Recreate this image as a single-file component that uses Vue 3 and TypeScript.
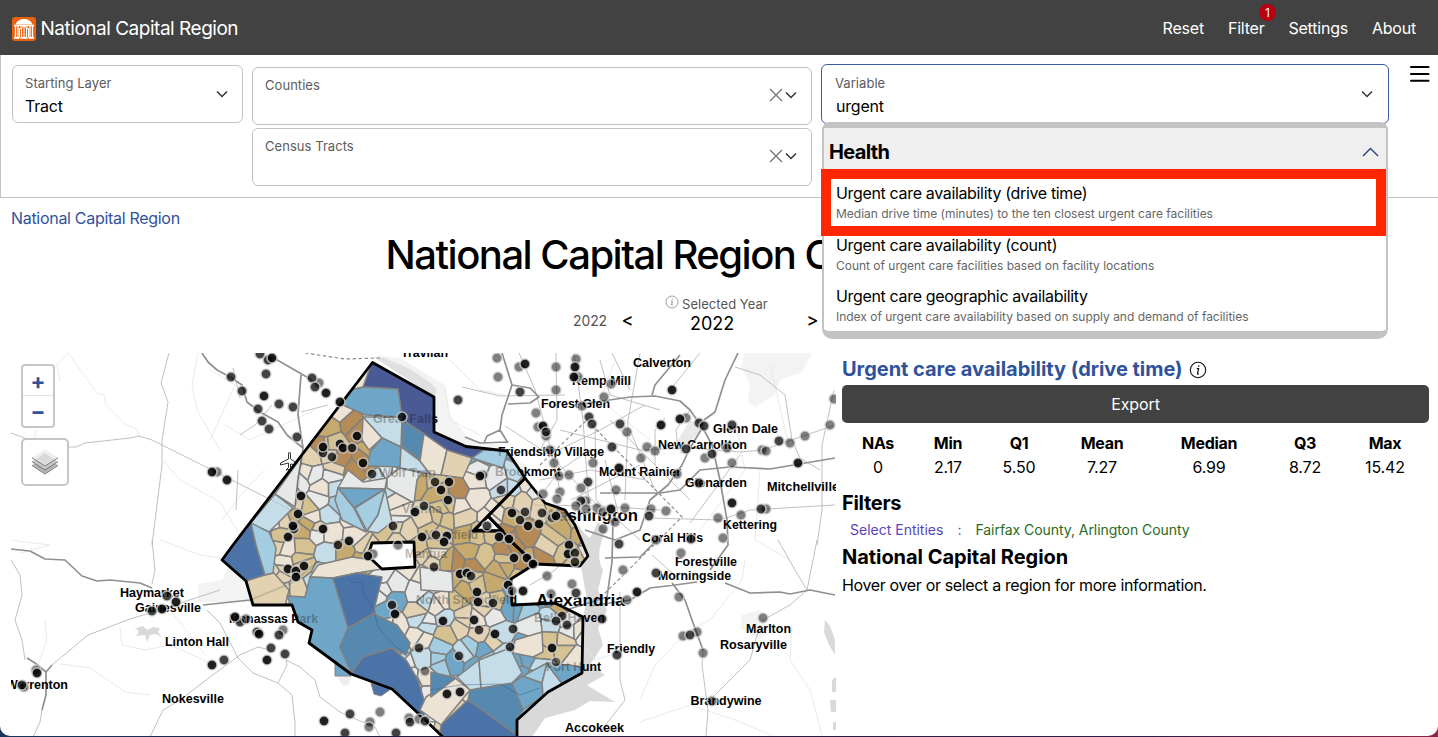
<script setup lang="ts">
type Pt = [number, number]
interface Label { t: string; x: number; y: number; w: number; s?: number }
interface Shape { d: string; fill: string }

const nav = ['Reset', 'Filter', 'Settings', 'About']
const options = [
  { name: 'Urgent care availability (drive time)', note: 'Median drive time (minutes) to the ten closest urgent care facilities' },
  { name: 'Urgent care availability (count)', note: 'Count of urgent care facilities based on facility locations' },
  { name: 'Urgent care geographic availability', note: 'Index of urgent care availability based on supply and demand of facilities' },
]
const stats = [['NAs', '0'], ['Min', '2.17'], ['Q1', '5.50'], ['Mean', '7.27'], ['Median', '6.99'], ['Q3', '8.72'], ['Max', '15.42']]

const shades: Record<string, string> = {
  n: '#4b5a96', a: '#4e73a8', b: '#578ab0', c: '#70a7c7', d: '#a6cee1', e: '#c5dde9',
  w: '#e7e9e8', k: '#ece3d4', t: '#e3d2b2', u: '#d6c190', v: '#c6a96e', x: '#b58b57',
}

const fairfax = 'M372.5 362.5L434 397V432L466 446.500L507 451L525 478L488 516L475 530L499 531L517 547L535 564L511 579L512 605L555 603L583 617L582 673L548 692L517 720V740H446L420 715L392 689L351 674L309 643L312 630L298 622L292 605H253L246 581L222 560L233 545Z'
const arlington = 'M525 478L545 503L565 510L575 525L588 556L580 566L535 564L517 547L488 516Z'
const fairfaxCity = 'M372 543L414 542L415 567L382 569L368 556Z'
const fallsChurch = 'M488 516L473 531H503Z'

// Colour anchors: a small tract takes the shade of the nearest one.
const anchors = `352,408,t 340,425,t 343,433,v 353,428,x 355,452,x 330,442,v 362,440,u 326,460,t 346,453,x 378,430,k 308,466,k 315,482,w 303,490,k 330,488,w 325,505,e
310,508,u 300,528,v 318,520,k 335,528,k 283,530,t 285,560,t 312,552,u 330,558,e 345,552,v 355,536,t 380,538,t 396,508,k 405,492,w 432,478,u 440,500,u 450,491,x
460,480,t 440,460,t 424,452,k 418,468,e 475,473,w 496,480,w 486,452,d 503,462,d 515,480,e 468,500,k 480,516,t 420,522,t 402,530,u 430,540,u 460,537,v 430,558,t
410,577,k 390,582,w 399,596,c 420,588,w 436,585,w 455,580,v 475,570,v 470,592,u 497,573,v 500,558,v 515,550,x 489,547,u 440,606,k 480,603,t 408,612,k 400,628,w
425,620,e 440,642,d 418,655,e 430,665,d 455,655,c 472,650,d 455,630,t 480,625,t 500,618,k 490,640,t 515,612,c 530,610,d 542,600,c 550,625,e 520,630,e 552,637,u
567,640,u 560,614,u 577,622,k 575,650,k 560,657,t 525,663,c 548,672,d 420,683,k 411,665,w 427,703,k 530,488,k 513,501,t 545,507,u 520,520,u 540,520,v 558,520,x
550,538,u 570,528,v 555,552,e 575,548,x 565,560,u 525,547,x 582,556,t 537,550,v 430,630,k 440,622,e 470,612,t 495,600,u 505,638,e 400,645,d`.split(/\s+/).map(a => a.split(','))

function noise(n: number): number {
  const v = Math.sin(n * 127.1 + 11.7) * 43758.5453
  return v - Math.floor(v)
}

function buildTracts(): Shape[] {
  const seeds: Pt[] = []
  const step = 14.5
  let k = 0
  for (let y = 395, row = 0; y < 712; y += step, row++) {
    for (let x = 245 + (row % 2) * step / 2; x < 600; x += step) {
      k++
      if (noise(k + 0.5) < 0.12) continue
      seeds.push([x + (noise(k) - 0.5) * 19, y + (noise(k + 900) - 0.5) * 19])
    }
  }
  return seeds.map((s, i) => {
    let cell: Pt[] = [[s[0] - 28, s[1] - 28], [s[0] + 28, s[1] - 28], [s[0] + 28, s[1] + 28], [s[0] - 28, s[1] + 28]]
    for (const o of seeds) {
      const dx = o[0] - s[0], dy = o[1] - s[1]
      if (o === s || dx * dx + dy * dy > 6400) continue
      const mx = s[0] + dx / 2, my = s[1] + dy / 2
      const side = (p: Pt) => (p[0] - mx) * dx + (p[1] - my) * dy
      const next: Pt[] = []
      cell.forEach((p, j) => {
        const q = cell[(j + 1) % cell.length]
        const a = side(p), b = side(q)
        if (a <= 0) next.push(p)
        if ((a < 0 && b > 0) || (a > 0 && b < 0)) {
          const r = a / (a - b)
          next.push([p[0] + (q[0] - p[0]) * r, p[1] + (q[1] - p[1]) * r])
        }
      })
      cell = next
    }
    let best = Infinity, code = 'k'
    for (const [ax, ay, c] of anchors) {
      const d = (Number(ax) - s[0]) ** 2 + (Number(ay) - s[1]) ** 2
      if (d < best) { best = d; code = c }
    }
    const order = 'cdewktuvx'
    const roll = noise(i + 40)
    const at = order.indexOf(code) + (roll < 0.24 ? -1 : roll > 0.88 ? 1 : 0)
    const key = order[Math.max(0, Math.min(order.length - 1, at))]
    return { d: 'M' + cell.map(p => p[0].toFixed(1) + ' ' + p[1].toFixed(1)).join('L') + 'Z', fill: shades[key] }
  })
}
const tracts = buildTracts()

const largeTracts: Shape[] = ([
  ['n', '372,362 440,397 434,432 466,446 484,450 472,458 447,450 424,434 402,419 398,389 363,387'],
  ['c', '363,387 398,389 402,417 365,415 343,405 350,390'],
  ['e', '363,417 402,417 401,447 382,438'],
  ['k', '363,417 382,438 369,450 362,440'],
  ['b', '402,420 424,434 420,460 402,446'],
  ['c', '382,438 401,447 400,467 368,466 370,452'],
  ['e', '401,447 420,461 430,474 400,468'],
  ['k', '424,434 447,450 441,475 430,474 420,461'],
  ['t', '447,450 472,458 463,478 441,475'],
  ['w', '387,478 400,468 422,473 417,480 414,503 387,488'],
  ['w', '338,488 348,470 363,482 387,478 385,489'],
  ['c', '338,488 385,489 354,508'],
  ['d', '338,488 354,508 366,532 342,520 335,500'],
  ['d', '385,489 378,515 367,531 355,508'],
  ['e', '385,489 392,522 378,533 367,531 378,515'],
  ['d', '484,450 508,450 503,468 472,458'],
  ['e', '275,494 293,508 269,532 250,524'],
  ['w', '302,456 298,478 295,507 275,494'],
  ['a', '222,560 251,523 256,545 265,575 246,581'],
  ['d', '251,523 269,532 276,548 273,573 265,575 256,545'],
  ['t', '246,581 265,575 274,573 289,590 285,606 253,606'],
  ['k', '310,577 318,565 352,557 372,560 382,569 357,573 333,578'],
  ['c', '310,577 333,578 348,612 348,628 340,647 352,674 335,676 309,643 312,630 298,622 287,596 305,597'],
  ['a', '333,578 357,573 382,577 373,614 348,628'],
  ['b', '348,628 373,614 397,625 410,643 406,655 392,648 363,657 352,674 340,647'],
  ['a', '363,657 392,648 406,660 418,680 424,700 424,718 392,689 351,674'],
  ['a', '441,725 468,700 517,735 517,740 440,740'],
  ['b', '470,690 512,683 523,710 517,720 517,735 468,700'],
  ['c', '512,683 523,676 542,683 543,696 523,710'],
  ['d', '523,676 547,663 542,683'],
  ['e', '547,663 563,685 543,696 542,683'],
  ['c', '547,664 570,665 584,668 582,675 563,685'],
  ['k', '426,697 455,678 470,690 441,725 420,710'],
  ['b', '431,672 456,678 431,697'],
  ['e', '457,677 479,660 481,688 470,690'],
  ['e', '479,660 510,648 522,673 512,683 481,688'],
  ['k', '515,640 542,632 543,652 533,657 513,653'],
  ['w', '420,567 452,572 453,592 421,590'],
] as [string, string][]).map(([c, p]) => ({ d: 'M' + p.split(' ').join('L') + 'Z', fill: shades[c] }))

const highways = `M202 353L208 362L217 370L230 377L242 385L247 402L260 412L278 422L287 435L303 448L299 478L296 505
M301 375L298 415L303 448 M272 357L312 380 M11 549L30 551L45 559L65 560L82 576L97 581L110 580L140 583L152 588
M27 658L35 663L46 672V695L42 710M46 672L52 665 M203 605L250 600L292 583L320 560
M502 353L512 385L502 415L500 430L508 443 M512 385L530 388L539 397L530 403L508 404 M500 430L487 436L484 443M465 437L480 443L508 442
M738 353L725 380L715 412L704 420 M575 405L630 397L655 396L680 401L690 410L704 430L712 445L720 480L727 520L728 545L710 570
M652 395L655 385L680 355 M704 425L690 448L682 465L668 485L650 500L640 530L615 540L585 530
M600 493L660 493L680 490L700 470L730 467L770 469L835 458 M605 558L640 557L657 540
M590 606L630 600L650 588L675 585L697 582 M725 583L750 593L780 592L790 594L810 590L835 595
M672 583L685 600L692 620L703 650 M613 520L612 562L607 597L560 612`
const minorRoads = `M11 433L30 440M68 447H76L85 443L130 438L139 436L152 440L210 469L295 512 M169 353L161 383L168 402L162 440V465L152 545
M152 540L155 570L152 584 M11 560L20 575L22 595L15 620L22 640L25 660 M42 710L40 722L33 737 M52 665L88 635L130 619L150 613L220 590
M207 610L220 623L238 658L253 673L278 683L292 695L295 723V737 M278 683L287 665L286 660L300 667L315 680L320 697L340 712L358 720L375 727L380 737
M210 677L240 655L258 647L270 650 M150 737L163 710L180 700L210 677 M735 367L760 375L785 395L792 440L800 458L820 470
M834 390L822 445V510L817 545 M650 518L720 520L750 510L835 505 M690 523L740 455 M703 650L702 665L706 695L708 710L706 737
M713 697L750 660L760 625M763 620L790 605L807 590L817 540M807 590L795 570L778 540 M620 592L620 680L625 700L600 732
M519 353L535 390L546 430L560 490 M556 353L557 420L540 450 M574 353L583 420L590 520 M612 353L630 390 M462 387L500 396L565 395
M505 426L550 455L600 508 M535 505L600 506L660 510 M640 353L628 420L625 500 M670 390L700 353 M595 420L596 500L640 540
M548 455L600 430L645 405 M640 450L690 448L740 452L763 450L835 425 M610 420L690 500 M580 545L555 570L530 585
M652 555L680 580 M545 490L560 470L590 450 M233 368L240 398M301 412L328 405M272 405L255 425L240 435M238 470L236 510
M690 410L676 430L678 450 M665 418L655 430V465 M600 360L610 395L660 410M646 480L590 470L540 480M560 430L640 450 M630 430L655 490 M605 460L620 520 M571 500L640 465`
const faintRoads = `M60 382L57 365L68 353L98 394L104 395L106 405L125 424L136 429L140 436 M198 353L192 385L197 410L220 450 M163 460L180 480L220 502L240 535
M11 540L25 542L50 545 M35 440V430 M20 553L50 545M160 540L200 555L235 560 M120 627L122 645L145 650L170 645L215 665 M60 664L90 668L125 692L150 695
M170 610L182 625L205 655 M45 620L47 640L38 665 M745 560L742 580L710 620L690 630 M683 636L655 665L640 700 M792 625L790 660L810 690L822 735
M640 722L690 705L735 720L775 737 M770 365L790 450 M210 370L235 385L210 440 M222 520L245 490L265 470 M315 410L250 440L225 425
M450 360L480 390L505 395 M615 360L600 400L650 440 M735 420L745 470L700 530 M760 470L755 540L790 560 M580 640L595 660L640 645 M445 387L450 420L480 435`

const labels: Label[] = [
  { t: 'Travilah', x: 401, y: 357, w: 47 }, { t: 'Calverton', x: 633, y: 367, w: 58 }, { t: 'Kemp Mill', x: 572, y: 385, w: 59 },
  { t: 'Forest Glen', x: 541, y: 408, w: 69 }, { t: 'Great Falls', x: 373, y: 423, w: 65 }, { t: 'Friendship Village', x: 498, y: 456, w: 106 },
  { t: 'Brookmont', x: 495, y: 475.5, w: 66 }, { t: 'Mount Rainier', x: 599, y: 476, w: 82 }, { t: 'Glenn Dale', x: 713, y: 433, w: 65 },
  { t: 'New Carrollton', x: 658, y: 449, w: 89 }, { t: 'Glenarden', x: 685, y: 487, w: 62 }, { t: 'Mitchellville', x: 767, y: 491, w: 72 },
  { t: 'Kettering', x: 723, y: 529, w: 54 }, { t: 'Coral Hills', x: 642, y: 542, w: 61 }, { t: 'Washington', x: 543, y: 521, w: 95, s: 17 },
  { t: 'Forestville', x: 675, y: 566, w: 62 }, { t: 'Morningside', x: 658, y: 580, w: 73 }, { t: 'Alexandria', x: 536, y: 605.5, w: 89, s: 17 },
  { t: 'Belle Haven', x: 534, y: 622, w: 71 }, { t: 'Fort Hunt', x: 546, y: 671, w: 55 }, { t: 'Friendly', x: 607, y: 653, w: 48 },
  { t: 'Accokeek', x: 565, y: 732, w: 59 }, { t: 'Marlton', x: 746, y: 633, w: 45 }, { t: 'Rosaryville', x: 720, y: 649, w: 67 },
  { t: 'Brandywine', x: 690.5, y: 704.5, w: 71 }, { t: 'Haymarket', x: 120, y: 597, w: 64 }, { t: 'Gainesville', x: 135, y: 612, w: 66 },
  { t: 'Linton Hall', x: 165, y: 646, w: 64 }, { t: 'Nokesville', x: 162, y: 703, w: 62 }, { t: 'Warrenton', x: 6, y: 689, w: 62 },
  { t: 'Manassas Park', x: 229, y: 623, w: 89 }, { t: 'Wolf Trap', x: 379, y: 477, w: 57 }, { t: 'Vienna', x: 402, y: 513, w: 40 },
  { t: 'Merrifield', x: 424, y: 539, w: 54 }, { t: 'Mantua', x: 405, y: 558, w: 42 }, { t: 'North Springfield', x: 416, y: 604, w: 101 },
]

// x, y, stacking depth
const dots = `231,377,2 242,391,2 264,396,3 258,409,2 279,404,2 293,407,2 262,421,2 269,429,2 297,437,2 266,374,2 268,360,2 272,358,3 260,354,2 319,383,1 312,378,2 315,387,2
326,393,3 340,402,3 402,417,2 357,436,3 323,453,2 323,447,3 340,444,3 343,448,3 352,448,2 332,457,2 363,463,3 372,474,2 217,472,1 212,472,3 227,480,3 301,496,3
298,514,3 294,529,2 293,526,3 288,537,3 323,529,3 349,541,3 338,545,2 393,526,2 415,512,3 424,506,2 422,537,3 398,545,1 497,358,1 519,367,1 525,364,3 498,377,1
520,392,2 458,400,2 556,367,1 556,390,1 576,359,1 575,367,3 578,377,1 574,377,3 611,384,1 604,397,1 582,406,1 536,413,1 589,417,2 592,424,2 538,427,1 543,426,3
546,436,1 546,432,2 620,424,2 627,432,1 612,447,2 593,463,1 550,450,1 554,463,1 619,468,3 559,476,1 569,475,1 560,492,1 557,499,1 543,494,1 588,482,2 581,488,1
616,490,1 483,475,1 480,476,3 501,490,2 435,482,2 449,482,3 441,490,3 448,500,3 512,513,3 525,512,2 542,513,2 520,520,2 528,526,3 539,524,3 552,518,1 556,516,3
487,526,2 436,535,2 447,536,3 444,542,3 499,537,3 509,539,3 569,545,3 586,501,1 581,501,2 576,506,1 586,509,1 597,508,1 603,512,1 611,509,3 625,508,1 615,522,1
603,529,1 619,544,2 672,390,3 686,418,1 680,419,3 699,423,2 704,426,2 661,425,3 732,425,2 647,447,1 655,451,1 641,458,1 686,449,2 727,448,1 732,463,1 705,458,1
712,454,2 762,450,1 766,451,1 779,441,2 790,443,1 805,436,1 798,463,3 830,425,1 834,399,1 677,474,1 699,483,2 651,509,1 649,516,2 666,511,1 718,518,1 732,503,3
741,515,1 766,509,1 761,509,2 723,538,1 656,540,1 691,539,2 167,596,2 176,602,3 152,611,2 162,609,3 36,670,1 37,673,3 24,687,1 22,685,2 212,665,3 240,622,2 235,617,3
246,619,1 257,632,2 259,634,3 283,630,1 279,635,2 271,648,2 267,660,3 285,654,2 224,660,2 288,569,3 296,571,3 296,577,3 304,566,3 373,554,1 368,556,3 392,605,2
395,614,3 419,648,2 425,671,1 380,712,1 350,714,2 324,721,3 370,722,1 369,727,1 345,733,2 396,733,2 409,718,1 410,722,2 419,719,1 425,721,2 434,567,2 460,574,3
467,573,3 471,576,2 477,592,3 478,602,3 493,603,2 514,558,3 527,558,3 533,564,3 508,585,3 512,591,1 523,591,3 547,576,1 551,594,1 572,584,1 576,593,2 568,554,3
575,553,2 575,562,2 623,570,1 637,592,3 627,600,1 602,619,2 443,621,3 474,620,3 479,630,2 495,634,3 513,629,2 510,647,2 562,616,2 556,621,2 567,625,2 552,648,3
556,662,1 617,655,2 459,656,2 447,694,3 460,692,3 656,573,2 681,553,1 679,597,1 763,618,1 683,636,1 697,632,1 690,635,2 703,653,1 712,701,1`
  .split(/\s+/).map(s => s.split(',').map(Number))
const depth = [0, 0.5, 0.74, 0.88]
</script>

<template>
  <div class="desktop">
    <div class="page">
      <header class="topbar">
        <svg class="logo" viewBox="0 0 24 24">
          <rect width="24" height="24" rx="3" fill="#ea620f" />
          <path d="M3.500 7.500Q5.500 2 12 2T20.500 7.500Z" fill="#fff" />
          <path d="M2 8.500H22M3.500 9V20M6 9V20M18 9V20M20.500 9V20" stroke="#fff" stroke-width="1.300" />
          <path d="M7.500 20V12Q12 6.500 16.500 12V20M9.500 20V11M12 20V10M14.500 20V11" fill="none" stroke="#fff" stroke-width="1.100" />
          <path d="M2 20.800H7.500M8.500 20.800H15.500M16.500 20.800H22" stroke="#fff" stroke-width="1.800" />
        </svg>
        <span class="brand">National Capital Region</span>
        <nav class="nav">
          <span v-for="n in nav" :key="n" class="nav-item">{{ n }}<b v-if="n === 'Filter'" class="badge">1</b></span>
        </nav>
      </header>

      <section class="controls">
        <div class="field layer">
          <div><label>Starting Layer</label><p>Tract</p></div>
          <svg class="chev" viewBox="0 0 12 8"><path d="M1 1.500L6 6.500L11 1.500" /></svg>
        </div>
        <div class="stack">
          <div v-for="l in ['Counties', 'Census Tracts']" :key="l" class="field multi">
            <div><label>{{ l }}</label></div>
            <svg class="clear" viewBox="0 0 14 14"><path d="M1 1L13 13M13 1L1 13" /></svg>
            <svg class="chev" viewBox="0 0 12 8"><path d="M1 1.500L6 6.500L11 1.500" /></svg>
          </div>
        </div>
        <div class="field variable">
          <div><label>Variable</label><p>urgent</p></div>
          <svg class="chev" viewBox="0 0 12 8"><path d="M1 1.500L6 6.500L11 1.500" /></svg>
          <div class="menu">
            <div class="group">
              <span>Health</span>
              <svg viewBox="0 0 16 10"><path d="M0.500 9L8 1.500L15.500 9" /></svg>
            </div>
            <div v-for="o in options" :key="o.name" class="option">
              <div class="name">{{ o.name }}</div>
              <div class="note">{{ o.note }}</div>
            </div>
            <div class="marker"></div>
          </div>
        </div>
        <svg class="burger" viewBox="0 0 20 18"><path d="M1 2H18.500M1 9H18.500M1 15.700H18.500" /></svg>
      </section>

      <div class="crumb">National Capital Region</div>
      <h1>National Capital Region Census Tracts</h1>
      <div class="years">
        <span class="first">2022</span>
        <span class="step">&lt;</span>
        <div class="selected">
          <div class="caption">
            <svg viewBox="0 0 14 14"><circle cx="7" cy="7" r="6" fill="none" stroke="#888" stroke-width=".8" /><path d="M7.600 3.500V4.500M6 6H7.300L6.600 10H7.700" fill="none" stroke="#888" stroke-width=".9" /></svg>
            <span>Selected Year</span>
          </div>
          <div class="year">2022</div>
        </div>
        <span class="step">&gt;</span>
      </div>

      <main class="content">
        <div class="map">
          <svg class="canvas" viewBox="11 353 825 383">
            <defs>
              <clipPath id="counties"><path :d="fairfax" /><path :d="arlington" /></clipPath>
            </defs>
            <g fill="#f3f3f3">
              <path d="M745 353H812L802 372L780 380L775 395L755 407L748 402L750 385L741 366Z" />
              <path d="M198 584L222 580L232 560L255 590L250 602H198Z" />
              <path d="M742 615L760 610L768 630L760 640L740 628Z" />
              <path d="M375 355L400 358L445 385L450 415L470 440L500 445L530 470L520 480L430 435V396Z" />
              <path d="M690 420L702 428L680 455L678 440Z" fill="#e9e9e9" />
              <path d="M338 677L352 676L348 685L344 686L340 682Z" fill="#eee" />
            </g>
            <g fill="#d9d9d9">
              <path d="M575 518Q582 534 590 538L598 522L606 530Q594 555 603 570L598 590L607 610L598 628L603 645L590 665L605 675L587 685L600 693L615 702L590 701L575 710L545 718L530 740H515V722L548 692L582 673L583 617L587 600L581 566L590 556L583 542Z" />
              <path d="M374 357L384 358L410 369L432 384L437 390L434 397Z" fill="#e0e0e0" />
              <path d="M132 624L136 628L143 626L147 630L153 627L160 628L158 632L162 637L156 634L150 635L147 642L145 635L136 636L139 632Z" />
              <path d="M825 620L830 626L835 640V655L829 645L824 632ZM832 680L836 677V692H832ZM830 700H836V712H831ZM833 722H836V730H833Z" />
            </g>
            <path :d="faintRoads" fill="none" stroke="#e4e4e4" stroke-width=".8" />
            <path :d="minorRoads" fill="none" stroke="#b0b0b0" stroke-width=".8" />
            <path :d="highways" fill="none" stroke="#909090" stroke-width="1.700" stroke-linejoin="round" />
            <path d="M540 465L587 420L682 517L600 598M305 353L345 359L380 358" fill="none" stroke="#8f8f8f" stroke-width="1.200" stroke-dasharray="3.500 2.500" />
            <path d="M288.500 454Q289.500 450 290.500 454V459L296.500 463V465L290.500 464V467.500L293 470L289.500 469.500L286 470L288.500 467.500V463L280.500 465V463L288.500 459Z" fill="#fff" stroke="#000" stroke-width=".8" />
            <g class="places">
              <text v-for="l in labels" :key="l.t" :x="l.x" :y="l.y" :textLength="l.w" lengthAdjust="spacingAndGlyphs" :font-size="l.s ?? 13">{{ l.t }}</text>
            </g>
            <g clip-path="url(#counties)">
              <g stroke="#808080" stroke-width="1.500" stroke-linejoin="round">
                <path v-for="(t, i) in tracts" :key="i" :d="t.d" :fill="t.fill" />
                <path v-for="(t, i) in largeTracts" :key="'l' + i" :d="t.d" :fill="t.fill" />
              </g>
              <path :d="fairfaxCity" fill="#fff" /><path :d="fallsChurch" fill="#fff" />
              <g opacity=".12" fill="none" stroke="#000"><path :d="minorRoads" stroke-width=".8" /><path :d="highways" stroke-width="2" /></g>
              <path d="M347 577L352 582L362 583L365 596L373 607L378 627L392 643L403 652M430 690L460 685L500 684L520 695L540 688" fill="none" stroke="#355c8c" opacity=".45" />
              <g class="places" opacity=".28">
                <text v-for="l in labels" :key="l.t" :x="l.x" :y="l.y" :textLength="l.w" lengthAdjust="spacingAndGlyphs" :font-size="l.s ?? 13">{{ l.t }}</text>
              </g>
            </g>
            <path d="M335 660V676H351Z" fill="#70a7c7" stroke="#828282" />
            <path d="M371 683L374 694L381 696L391 689Z" fill="#4e73a8" stroke="#828282" />
            <g fill="none" stroke="#000" stroke-width="2.800" stroke-linejoin="round">
              <path :d="fairfax" /><path :d="arlington" /><path :d="fairfaxCity" /><path :d="fallsChurch" />
            </g>
            <g stroke="#d2d2d2" stroke-opacity=".8" stroke-width="1.600">
              <circle v-for="(d, i) in dots" :key="i" :cx="d[0]" :cy="d[1]" r="5" fill="#000" :fill-opacity="depth[d[2]]" />
            </g>
          </svg>
          <div class="zoom"><span>+</span><span>−</span></div>
          <div class="layers">
            <svg viewBox="0 0 26 26">
              <path d="M0 16L13 24.500L26 16L13 10Z" fill="#b4b4b4" /><path d="M0 16.500L13 25L26 16.500" fill="none" stroke="#777" />
              <path d="M0 12.500L13 21L26 12.500L13 6Z" fill="#c8c8c8" /><path d="M0 12.700L13 21L26 12.700" fill="none" stroke="#777" />
              <path d="M0 8.500L13 0L26 8.500L13 17Z" fill="#efefef" /><path d="M4 10L13 4L22 10L13 16Z" fill="#dadada" /><path d="M0 8.800L13 17L26 8.800" fill="none" stroke="#777" />
            </svg>
          </div>
        </div>

        <aside class="info">
          <div class="title">
            <span>Urgent care availability (drive time)</span>
            <svg viewBox="0 0 18 18"><circle cx="9" cy="9" r="7.700" fill="none" stroke="#111" stroke-width="1.100" /><path d="M9.800 4.300V5.700M7.800 7.700H9.600L8.500 13H10" fill="none" stroke="#111" stroke-width="1.200" /></svg>
          </div>
          <button class="export">Export</button>
          <div class="stats">
            <div v-for="s in stats" :key="s[0]"><b>{{ s[0] }}</b><span>{{ s[1] }}</span></div>
          </div>
          <h2 class="filters-h">Filters</h2>
          <div class="filter"><span class="key">Select Entities</span><span class="colon">:</span><span class="value">Fairfax County, Arlington County</span></div>
          <h2 class="region-h">National Capital Region</h2>
          <p class="hint">Hover over or select a region for more information.</p>
        </aside>
      </main>
    </div>
  </div>
</template>

<style>
body { overflow: hidden; }
</style>

<style scoped>
* { box-sizing: border-box; }
.desktop { height: 737px; background: linear-gradient(90deg, #16365c, #241a3c 30%, #2c1d46 80%, #8a2448); font-family: Inter, "Liberation Sans", sans-serif; color: #000; font-size: 16px; }
.page { height: 736px; background: #fff; border-radius: 0 0 10px 10px; overflow: hidden; white-space: nowrap; }
p, h1, h2 { margin: 0; }
svg { display: block; flex: none; }

.topbar { height: 55px; background: #424242; color: #fff; display: flex; align-items: center; padding: 3px 22px 0 12px; }
.logo { width: 24px; height: 24px; }
.brand { margin-left: 4.500px; font-size: 19px; letter-spacing: -.48px; line-height: 24px; }
.nav { margin: -2px 0 0 auto; display: flex; gap: 24px; font-size: 16px; letter-spacing: -.22px; }
.nav-item { position: relative; line-height: 24px; }
.badge { position: absolute; left: 31px; top: -12px; width: 17px; height: 17px; border-radius: 50%; background: #b90010; font-size: 12px; font-weight: 400; line-height: 17px; text-align: center; }

.controls { height: 143px; border-left: 1px solid #c3c3c3; border-bottom: 1px solid #c3c3c3; display: flex; align-items: flex-start; padding: 10px 0 0 11px; }
.field { position: relative; display: flex; align-items: center; border: 1px solid #c3c3c3; border-radius: 6px; height: 58px; padding-left: 12px; }
.field > div:first-child { margin-right: auto; align-self: flex-start; }
.field label { display: block; margin-top: 8px; font-size: 13px; line-height: 18px; color: #5c5c5c; letter-spacing: .05px; }
.field p { font-size: 16px; line-height: 22px; margin-top: 3px; letter-spacing: -.2px; }
.layer { width: 230.500px; padding-right: 14px; }
.stack { width: 560px; margin: 2px 9px 0 9.500px; display: flex; flex-direction: column; gap: 3px; }
.multi { padding-right: 14px; }
.multi .chev { margin-left: 2px; }
.multi .chev, .multi .clear { margin-bottom: 2px; }
.variable { width: 568px; height: 60px; margin-top: -1px; border: 1.500px solid #3a5da5; padding: 0 15px 0 13px; }
.field.variable label { margin-top: 9px; }
.variable p { margin-left: 1px; }
.chev { width: 12px; height: 8px; }
.chev path { fill: none; stroke: #333; stroke-width: 1.500; }
.clear { width: 14px; height: 14px; }
.clear path { fill: none; stroke: #777; stroke-width: 1.400; }
.burger { width: 20px; height: 18px; margin: 0 0 0 21px; }
.burger path { fill: none; stroke: #000; stroke-width: 2; stroke-linecap: round; }

.menu { position: absolute; z-index: 5; left: 0; top: 57px; width: 566px; height: 217px; border: solid #c3c3c3; border-width: 6px 2px 8px 2px; border-radius: 8px 8px 10px 10px; background: #fff; }
.group { height: 41px; background: #efefef; display: flex; align-items: center; justify-content: space-between; padding: 7px 7.500px 0 5px; font-size: 20px; font-weight: 700; letter-spacing: -.65px; }
.group svg { width: 17px; height: 10px; }
.group path { fill: none; stroke: #24427c; stroke-width: 1.400; }
.option { height: 51.500px; padding: 13px 0 0 12px; }
.name { font-size: 16px; line-height: 22px; letter-spacing: -.34px; }
.note { margin-top: 1px; font-size: 12px; line-height: 18px; color: #666; letter-spacing: -.015px; }
.marker { position: absolute; left: -3px; top: 41px; width: 565px; height: 67px; border: 10px solid #ff2600; }

.crumb { margin: 9px 0 0 11px; height: 23px; line-height: 22px; color: #2f529b; letter-spacing: -.3px; }
h1 { margin-left: 385.500px; font-size: 40px; font-weight: 540; line-height: 50px; letter-spacing: -1.500px; }
.years { height: 73px; display: flex; padding-left: 573px; }
.first { width: 48.500px; padding-top: 31px; font-size: 14px; line-height: 20px; color: #555; letter-spacing: -.1px; }
.step { width: 11px; padding-top: 30px; line-height: 20px; font-size: 18px; font-weight: 500; }
.selected { width: 174px; padding-top: 14px; }
.caption { display: flex; align-items: flex-start; margin-left: 32.500px; font-size: 13px; line-height: 20px; color: #555; letter-spacing: .05px; }
.caption span { margin-left: 3px; }
.caption svg { width: 14px; height: 14px; margin-top: 1px; }
.year { margin-left: 57.500px; font-size: 18px; line-height: 20px; }

.content { display: flex; height: 383px; padding-left: 11px; }
.map { position: relative; width: 825px; height: 383px; overflow: hidden; }
.canvas { width: 825px; height: 383px; }
.places { font-family: "Liberation Sans", Arial, sans-serif; font-weight: 700; }
.zoom { position: absolute; left: 10px; top: 11px; width: 34px; height: 64px; border: 2px solid #c6c6c6; border-radius: 4px; background: #fff; color: #2f529b; font-size: 22px; font-weight: 700; text-align: center; }
.zoom span { display: block; height: 30px; line-height: 30px; }
.zoom span:first-child { border-bottom: 1px solid #e1e1e1; }
.layers { position: absolute; left: 10px; top: 85px; width: 48px; height: 48px; border: 2px solid #c6c6c6; border-radius: 5px; background: #fff; padding: 9px; }
.layers svg { width: 26px; height: 26px; }

.info { width: 587px; margin-left: 6px; padding-top: 3px; }
.title { display: flex; align-items: center; height: 26px; font-size: 20px; font-weight: 700; color: #2f529b; letter-spacing: -.04px; }
.title svg { width: 18px; height: 18px; margin: 2px 0 0 6px; }
.export { display: block; width: 587px; height: 38px; margin-top: 3px; border: 0; border-radius: 5px; background: #424242; color: #fff; font: 16px Inter, sans-serif; letter-spacing: -.1px; }
.stats { display: grid; grid-template-columns: 72px 68px 74px 92px 122px 70px 90px; margin-top: 8px; text-align: center; letter-spacing: -.15px; }
.stats b, .stats span { display: block; line-height: 24px; }
.stats b { font-weight: 700; letter-spacing: -.3px; }
h2 { font-size: 20px; font-weight: 700; line-height: 26px; letter-spacing: -.05px; }
.filters-h { margin-top: 11px; letter-spacing: -.3px; }
.filter { display: flex; margin-left: 8px; height: 28px; line-height: 27px; font-size: 14px; }
.key { color: #5a45ba; }
.colon { margin: 0 14px; color: #5a45ba; }
.value { color: #286b1c; letter-spacing: -.06px; }
.hint { margin-top: 4px; line-height: 22px; letter-spacing: -.35px; }
</style>
